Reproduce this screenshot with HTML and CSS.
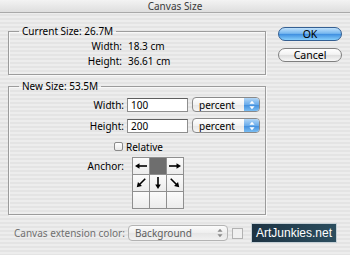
FILE: index.html
```html
<!DOCTYPE html>
<html>
<head>
    <title>Canvas Size</title>
    <meta http-equiv='Content-Type' content='text/html; charset=utf-8' />
    <link rel="stylesheet" href="styles.css">
</head>
<body>
    <svg width="0" height="0" style="position:absolute">
        <symbol id="arrow" viewBox="0 0 16 16">
            <line x1="2" y1="8" x2="10.5" y2="8" stroke="#000" stroke-width="1.6" />
            <polygon points="14,8 9.5,5.2 9.5,10.8" fill="#000" />
        </symbol>
        <symbol id="updown" viewBox="0 0 7 11">
            <polygon points="3.5,0.5 6.5,4 0.5,4" />
            <polygon points="3.5,10.5 6.5,7 0.5,7" />
        </symbol>
    </svg>

    <div class="titlebar">Canvas Size</div>

    <div class="content">
        <div class="main">
            <fieldset class="group current">
                <legend>Current Size: 26.7M</legend>
                <div class="row"><span class="label">Width:</span><span class="value">18.3 cm</span></div>
                <div class="row"><span class="label">Height:</span><span class="value">36.61 cm</span></div>
            </fieldset>

            <fieldset class="group newsize">
                <legend>New Size: 53.5M</legend>
                <div class="row field">
                    <span class="label">Width:</span>
                    <input class="text" type="text" value="100" />
                    <div class="popup"><span class="popup-text">percent</span><span class="stepper"><svg><use href="#updown" /></svg></span></div>
                </div>
                <div class="row field">
                    <span class="label">Height:</span>
                    <input class="text" type="text" value="200" />
                    <div class="popup"><span class="popup-text">percent</span><span class="stepper"><svg><use href="#updown" /></svg></span></div>
                </div>
                <div class="check"><span class="box"></span>Relative</div>
                <div class="anchor-row">
                    <span class="label">Anchor:</span>
                    <div class="anchor">
                        <div class="cell"><svg class="left"><use href="#arrow" /></svg></div>
                        <div class="cell on"></div>
                        <div class="cell"><svg><use href="#arrow" /></svg></div>
                        <div class="cell"><svg class="down-left"><use href="#arrow" /></svg></div>
                        <div class="cell"><svg class="down"><use href="#arrow" /></svg></div>
                        <div class="cell"><svg class="down-right"><use href="#arrow" /></svg></div>
                        <div class="cell"></div>
                        <div class="cell"></div>
                        <div class="cell"></div>
                    </div>
                </div>
            </fieldset>
        </div>

        <div class="buttons">
            <button class="btn default">OK</button>
            <button class="btn">Cancel</button>
        </div>
    </div>

    <div class="footer">
        <span class="dim-label">Canvas extension color:</span>
        <div class="popup disabled"><span class="popup-text">Background</span><span class="stepper"><svg><use href="#updown" /></svg></span></div>
        <span class="swatch"></span>
        <span class="watermark">ArtJunkies.net</span>
    </div>
</body>
</html>
```

FILE: styles.css
```css
* {
    box-sizing: border-box;
}

html, body {
    margin: 0;
}

body {
    width: 350px;
    height: 255px;
    overflow: hidden;
    background: repeating-linear-gradient(#ededed 0 2px, #e4e4e4 2px 4px);
    font-family: 'Noto Sans', sans-serif;
    font-size: 10px;
    color: #000;
}

.titlebar {
    height: 13px;
    border-bottom: 1px solid #a9a9a9;
    background: linear-gradient(#f3f3f3, #dedede);
    text-align: center;
    line-height: 12px;
    color: #3a3a3a;
}

.content {
    display: flex;
    gap: 12px;
    padding: 11px 8px 0 8px;
}

.main {
    width: 258px;
}

.group {
    margin: 0;
    padding: 0 0 6px 0;
    min-width: 0;
    border: 1px solid #9c9c9c;
    box-shadow: 1px 1px 0 #f8f8f8, inset 1px 1px 0 #f8f8f8;
}

.group legend {
    margin-left: 10px;
    padding: 0 3px;
    line-height: 14px;
}

.newsize {
    margin-top: 4px;
    padding-top: 4px;
    padding-bottom: 5px;
}

.row {
    display: flex;
    align-items: center;
    height: 15px;
}

.label {
    width: 113px;
    text-align: right;
}

.value {
    margin-left: 6px;
}

.newsize .label {
    width: 115px;
}

.field + .field {
    margin-top: 6px;
}

input.text {
    width: 61px;
    height: 14px;
    margin: 0 0 0 3px;
    padding: 0 3px;
    border: 1px solid #8e8e8e;
    border-top-color: #5e5e5e;
    background: #fff;
    font: inherit;
    color: #000;
}

.popup {
    display: flex;
    align-items: center;
    width: 68px;
    height: 15px;
    margin-left: 4px;
    overflow: hidden;
    border: 1px solid #8a8a8a;
    border-radius: 4px;
    background: linear-gradient(#ffffff, #f2f2f2 50%, #e6e6e6 51%, #f6f6f6);
}

.popup-text {
    flex: 1;
    padding-left: 6px;
}

.stepper {
    display: flex;
    align-items: center;
    justify-content: center;
    width: 15px;
    height: 100%;
    background: linear-gradient(#b2d6f6, #6aaceb 50%, #3f8cdc 51%, #79bdf3);
    fill: #fff;
}

.stepper svg {
    width: 6px;
    height: 10px;
}

.check {
    display: flex;
    align-items: center;
    height: 13px;
    margin: 7px 0 0 105px;
}

.box {
    width: 9px;
    height: 9px;
    margin-right: 3px;
    border: 1px solid #8a8a8a;
    border-radius: 2px;
    background: linear-gradient(#fff, #e9e9e9);
}

.anchor-row {
    display: flex;
    align-items: flex-start;
    margin-top: 4px;
}

.anchor-row .label {
    padding-top: 2px;
}

.anchor {
    display: grid;
    grid-template-columns: repeat(3, 16px);
    grid-auto-rows: 16px;
    gap: 1px;
    margin-left: 8px;
    padding: 1px;
    background: #8f8f8f;
}

.cell {
    display: flex;
    align-items: center;
    justify-content: center;
    background: linear-gradient(#fbfbfb, #ececec);
}

.cell.on {
    background: #6e6e6e;
}

.cell svg {
    width: 16px;
    height: 16px;
}

.cell svg.left { transform: rotate(180deg); }
.cell svg.down { transform: rotate(90deg); }
.cell svg.down-left { transform: rotate(135deg); }
.cell svg.down-right { transform: rotate(45deg); }

.buttons {
    display: flex;
    flex-direction: column;
    gap: 7px;
    margin-top: 3px;
}

.btn {
    width: 64px;
    height: 14px;
    padding: 0;
    border: 1px solid #7f7f7f;
    border-radius: 7px;
    background: linear-gradient(#ffffff, #f3f3f3 45%, #dedede 52%, #f8f8f8);
    font: inherit;
    font-size: 10.5px;
    line-height: 12px;
    color: #000;
}

.btn.default {
    border-color: #345f92;
    background: linear-gradient(#bfe0fb, #78b8ef 45%, #3f8fe0 52%, #86cefb);
}

.footer {
    display: flex;
    align-items: center;
    height: 20px;
    margin-top: 8px;
    padding-left: 14px;
}

.dim-label {
    width: 114px;
    color: #707070;
}

.popup.disabled {
    width: 100px;
    height: 16px;
    margin-left: 0;
    border-color: #b3b3b3;
    background: linear-gradient(#fbfbfb, #eeeeee 50%, #e5e5e5 51%, #f1f1f1);
    color: #5e5e5e;
}

.popup.disabled .stepper {
    background: none;
    fill: #8a8a8a;
}

.swatch {
    width: 11px;
    height: 11px;
    margin-left: 4px;
    border: 1px solid #b2b2b2;
    background: #f0f0f0;
}

.watermark {
    width: 86px;
    height: 20px;
    margin-left: 8px;
    border: 1px solid #c5d0d6;
    background: linear-gradient(90deg, #1d3343, #2c4e5f);
    color: #fff;
    font-family: 'Liberation Sans', Arial, sans-serif;
    font-size: 12px;
    line-height: 18px;
    text-align: center;
}
```
